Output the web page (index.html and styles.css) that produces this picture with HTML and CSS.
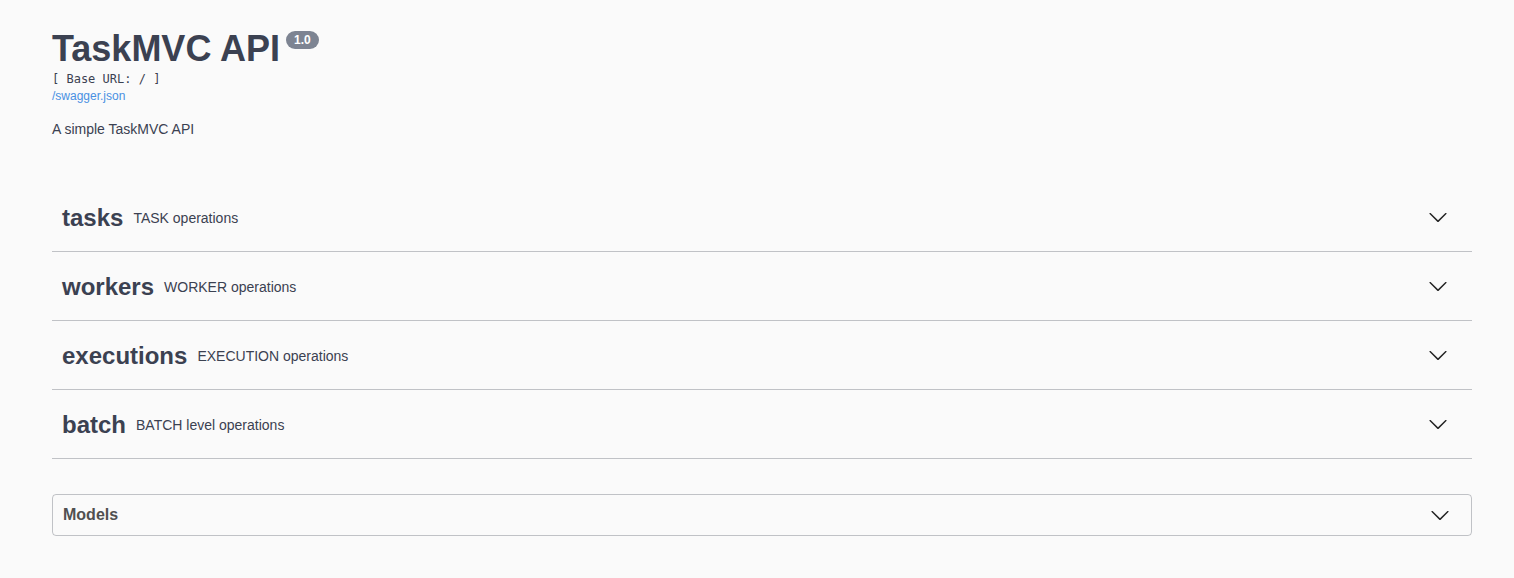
FILE: index.html
```html
<html>
  <head>
    <meta charset="utf-8">
    <title>TaskMVC API</title>
    <link rel="stylesheet" href="styles.css">
  </head>
  <body>
    <div class="wrapper">
      <div class="info">
        <h2 class="title">TaskMVC API <span class="version">1.0</span></h2>
        <pre class="base-url">[ Base URL: / ]</pre>
        <a class="spec-link" href="#">/swagger.json</a>
        <div class="description">A simple TaskMVC API</div>
      </div>

      <div class="tags">
        <div class="tag-section">
          <h3 class="tag">
            <span class="tag-name">tasks</span>
            <span class="tag-desc">TASK operations</span>
            <svg class="arrow" width="20" height="20" viewBox="0 0 20 20"><path d="M17.418 6.109c.272-.268.709-.268.979 0s.271.701 0 .969l-7.908 7.83c-.27.268-.707.268-.979 0l-7.908-7.830c-.27-.268-.27-.701 0-.969.271-.268.709-.268.979 0L10 13.25l7.418-7.141z"/></svg>
          </h3>
        </div>
        <div class="tag-section">
          <h3 class="tag">
            <span class="tag-name">workers</span>
            <span class="tag-desc">WORKER operations</span>
            <svg class="arrow" width="20" height="20" viewBox="0 0 20 20"><path d="M17.418 6.109c.272-.268.709-.268.979 0s.271.701 0 .969l-7.908 7.83c-.27.268-.707.268-.979 0l-7.908-7.830c-.27-.268-.27-.701 0-.969.271-.268.709-.268.979 0L10 13.25l7.418-7.141z"/></svg>
          </h3>
        </div>
        <div class="tag-section">
          <h3 class="tag">
            <span class="tag-name">executions</span>
            <span class="tag-desc">EXECUTION operations</span>
            <svg class="arrow" width="20" height="20" viewBox="0 0 20 20"><path d="M17.418 6.109c.272-.268.709-.268.979 0s.271.701 0 .969l-7.908 7.83c-.27.268-.707.268-.979 0l-7.908-7.830c-.27-.268-.27-.701 0-.969.271-.268.709-.268.979 0L10 13.25l7.418-7.141z"/></svg>
          </h3>
        </div>
        <div class="tag-section">
          <h3 class="tag">
            <span class="tag-name">batch</span>
            <span class="tag-desc">BATCH level operations</span>
            <svg class="arrow" width="20" height="20" viewBox="0 0 20 20"><path d="M17.418 6.109c.272-.268.709-.268.979 0s.271.701 0 .969l-7.908 7.83c-.27.268-.707.268-.979 0l-7.908-7.830c-.27-.268-.27-.701 0-.969.271-.268.709-.268.979 0L10 13.25l7.418-7.141z"/></svg>
          </h3>
        </div>
      </div>

      <section class="models">
        <h4 class="models-title">
          <span>Models</span>
          <svg class="arrow" width="20" height="20" viewBox="0 0 20 20"><path d="M17.418 6.109c.272-.268.709-.268.979 0s.271.701 0 .969l-7.908 7.83c-.27.268-.707.268-.979 0l-7.908-7.830c-.27-.268-.27-.701 0-.969.271-.268.709-.268.979 0L10 13.25l7.418-7.141z"/></svg>
        </h4>
      </section>
    </div>
  </body>
</html>
```

FILE: styles.css
```css
body {
    margin: 0;
    background: #fafafa;
    font-family: "Liberation Sans", Arial, sans-serif;
    color: #3b4151;
}
.wrapper {
    width: 1420px;
    margin-left: 52px;
}
.info {
    padding-top: 28px;
}
.title {
    margin: 0;
    display: flex;
    align-items: flex-start;
    font-size: 36px;
    font-weight: bold;
    line-height: 41px;
    color: #3b4151;
}
.version {
    margin-left: 6px;
    margin-top: 3px;
    height: 18px;
    padding: 0 8px;
    border-radius: 57px;
    background: #7d8492;
    color: #fff;
    font-size: 12px;
    font-weight: bold;
    line-height: 18px;
}
.base-url {
    margin: 2px 0 0;
    font-family: "DejaVu Sans Mono", "Liberation Mono", monospace;
    font-size: 12px;
    line-height: 16px;
    color: #3b4151;
}
.spec-link {
    display: block;
    margin-top: 1px;
    font-size: 12px;
    line-height: 16px;
    color: #4990e2;
    text-decoration: none;
}
.description {
    margin-top: 17px;
    font-size: 14px;
    line-height: 17px;
}
.tags {
    margin-top: 49px;
}
.tag-section {
    margin-bottom: 4px;
}
.tag {
    margin: 0;
    height: 62px;
    display: flex;
    align-items: center;
    padding: 0 24px 2px 10px;
    border-bottom: 1px solid rgba(59, 65, 81, .3);
    font-weight: normal;
}
.tag-name {
    font-size: 24px;
    font-weight: bold;
}
.tag-desc {
    margin-left: 10px;
    flex: 1;
    font-size: 14px;
}
.tag .arrow {
    margin-bottom: 2px;
}
.arrow {
    fill: #222;
}
.models {
    margin-top: 35px;
    border: 1px solid rgba(59, 65, 81, .3);
    border-radius: 4px;
}
.models-title {
    margin: 0;
    height: 40px;
    display: flex;
    align-items: center;
    justify-content: space-between;
    padding: 0 21px 0 10px;
    font-size: 16px;
    font-weight: bold;
    color: #505050;
}
```
